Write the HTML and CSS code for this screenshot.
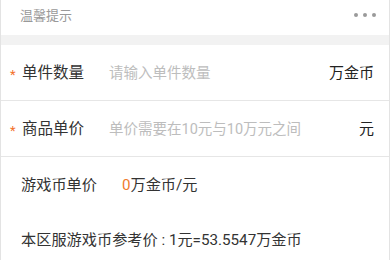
FILE: index.html
```html
<!DOCTYPE html>
<html lang="zh">
<head>
<meta charset="utf-8">
<link rel="stylesheet" href="styles.css">
</head>
<body>
<div class="page">
  <div class="header">
    <span class="title">温馨提示</span>
    <span class="more"><i></i><i></i><i></i></span>
  </div>
  <div class="band"></div>
  <div class="row bordered">
    <span class="star">*</span>
    <span class="label">单件数量</span>
    <span class="ph">请输入单件数量</span>
    <span class="unit">万金币</span>
  </div>
  <div class="row bordered">
    <span class="star">*</span>
    <span class="label">商品单价</span>
    <span class="ph">单价需要在10元与10万元之间</span>
    <span class="unit">元</span>
  </div>
  <div class="row info">
    <span class="label">游戏币单价</span>
    <span class="val"><em>0</em>万金币/元</span>
  </div>
  <div class="row info ref">
    <span class="label">本区服游戏币参考价 : 1元=53.5547万金币</span>
  </div>
</div>
</body>
</html>
```
FILE: styles.css
```css
html, body {
  margin: 0;
  padding: 0;
  background: #fff;
}
body {
  font-family: Roboto, "Noto Sans CJK SC", sans-serif;
  color: #333;
}
.page {
  width: 390px;
  height: 260px;
  box-sizing: border-box;
  border-left: 1px solid #e3e3e3;
  border-right: 1px solid #e3e3e3;
  margin-right: 1px;
  overflow: hidden;
}
.header {
  height: 35px;
  display: flex;
  align-items: center;
  justify-content: space-between;
  padding: 0 13px 6px 19px;
  box-sizing: border-box;
}
.title {
  font-size: 13px;
  color: #999;
}
.more {
  display: flex;
  gap: 5px;
}
.more i {
  width: 4px;
  height: 4px;
  border-radius: 50%;
  background: #9a9a9a;
}
.band {
  height: 10px;
  background: #f2f2f2;
}
.row {
  display: flex;
  align-items: center;
  padding: 0 15px 3px 8px;
  box-sizing: border-box;
}
.bordered {
  height: 56px;
  border-bottom: 1px solid #e6e6e6;
}
.star {
  color: #f3712b;
  font-size: 13px;
  width: 12px;
  padding-top: 6px;
  padding-left: 1px;
}
.label {
  font-size: 15.5px;
  color: #333;
}
.ph {
  font-size: 14.5px;
  color: #bdbdbd;
  margin-left: 25px;
  flex: 1;
}
.unit {
  font-size: 15px;
  color: #222;
}
.info {
  padding-left: 20px;
  height: 55px;
}
.info .label {
  font-size: 15.2px;
}
.val {
  font-size: 15.2px;
  margin-left: 25px;
}
.val em {
  font-style: normal;
  color: #f07b2c;
}
```
